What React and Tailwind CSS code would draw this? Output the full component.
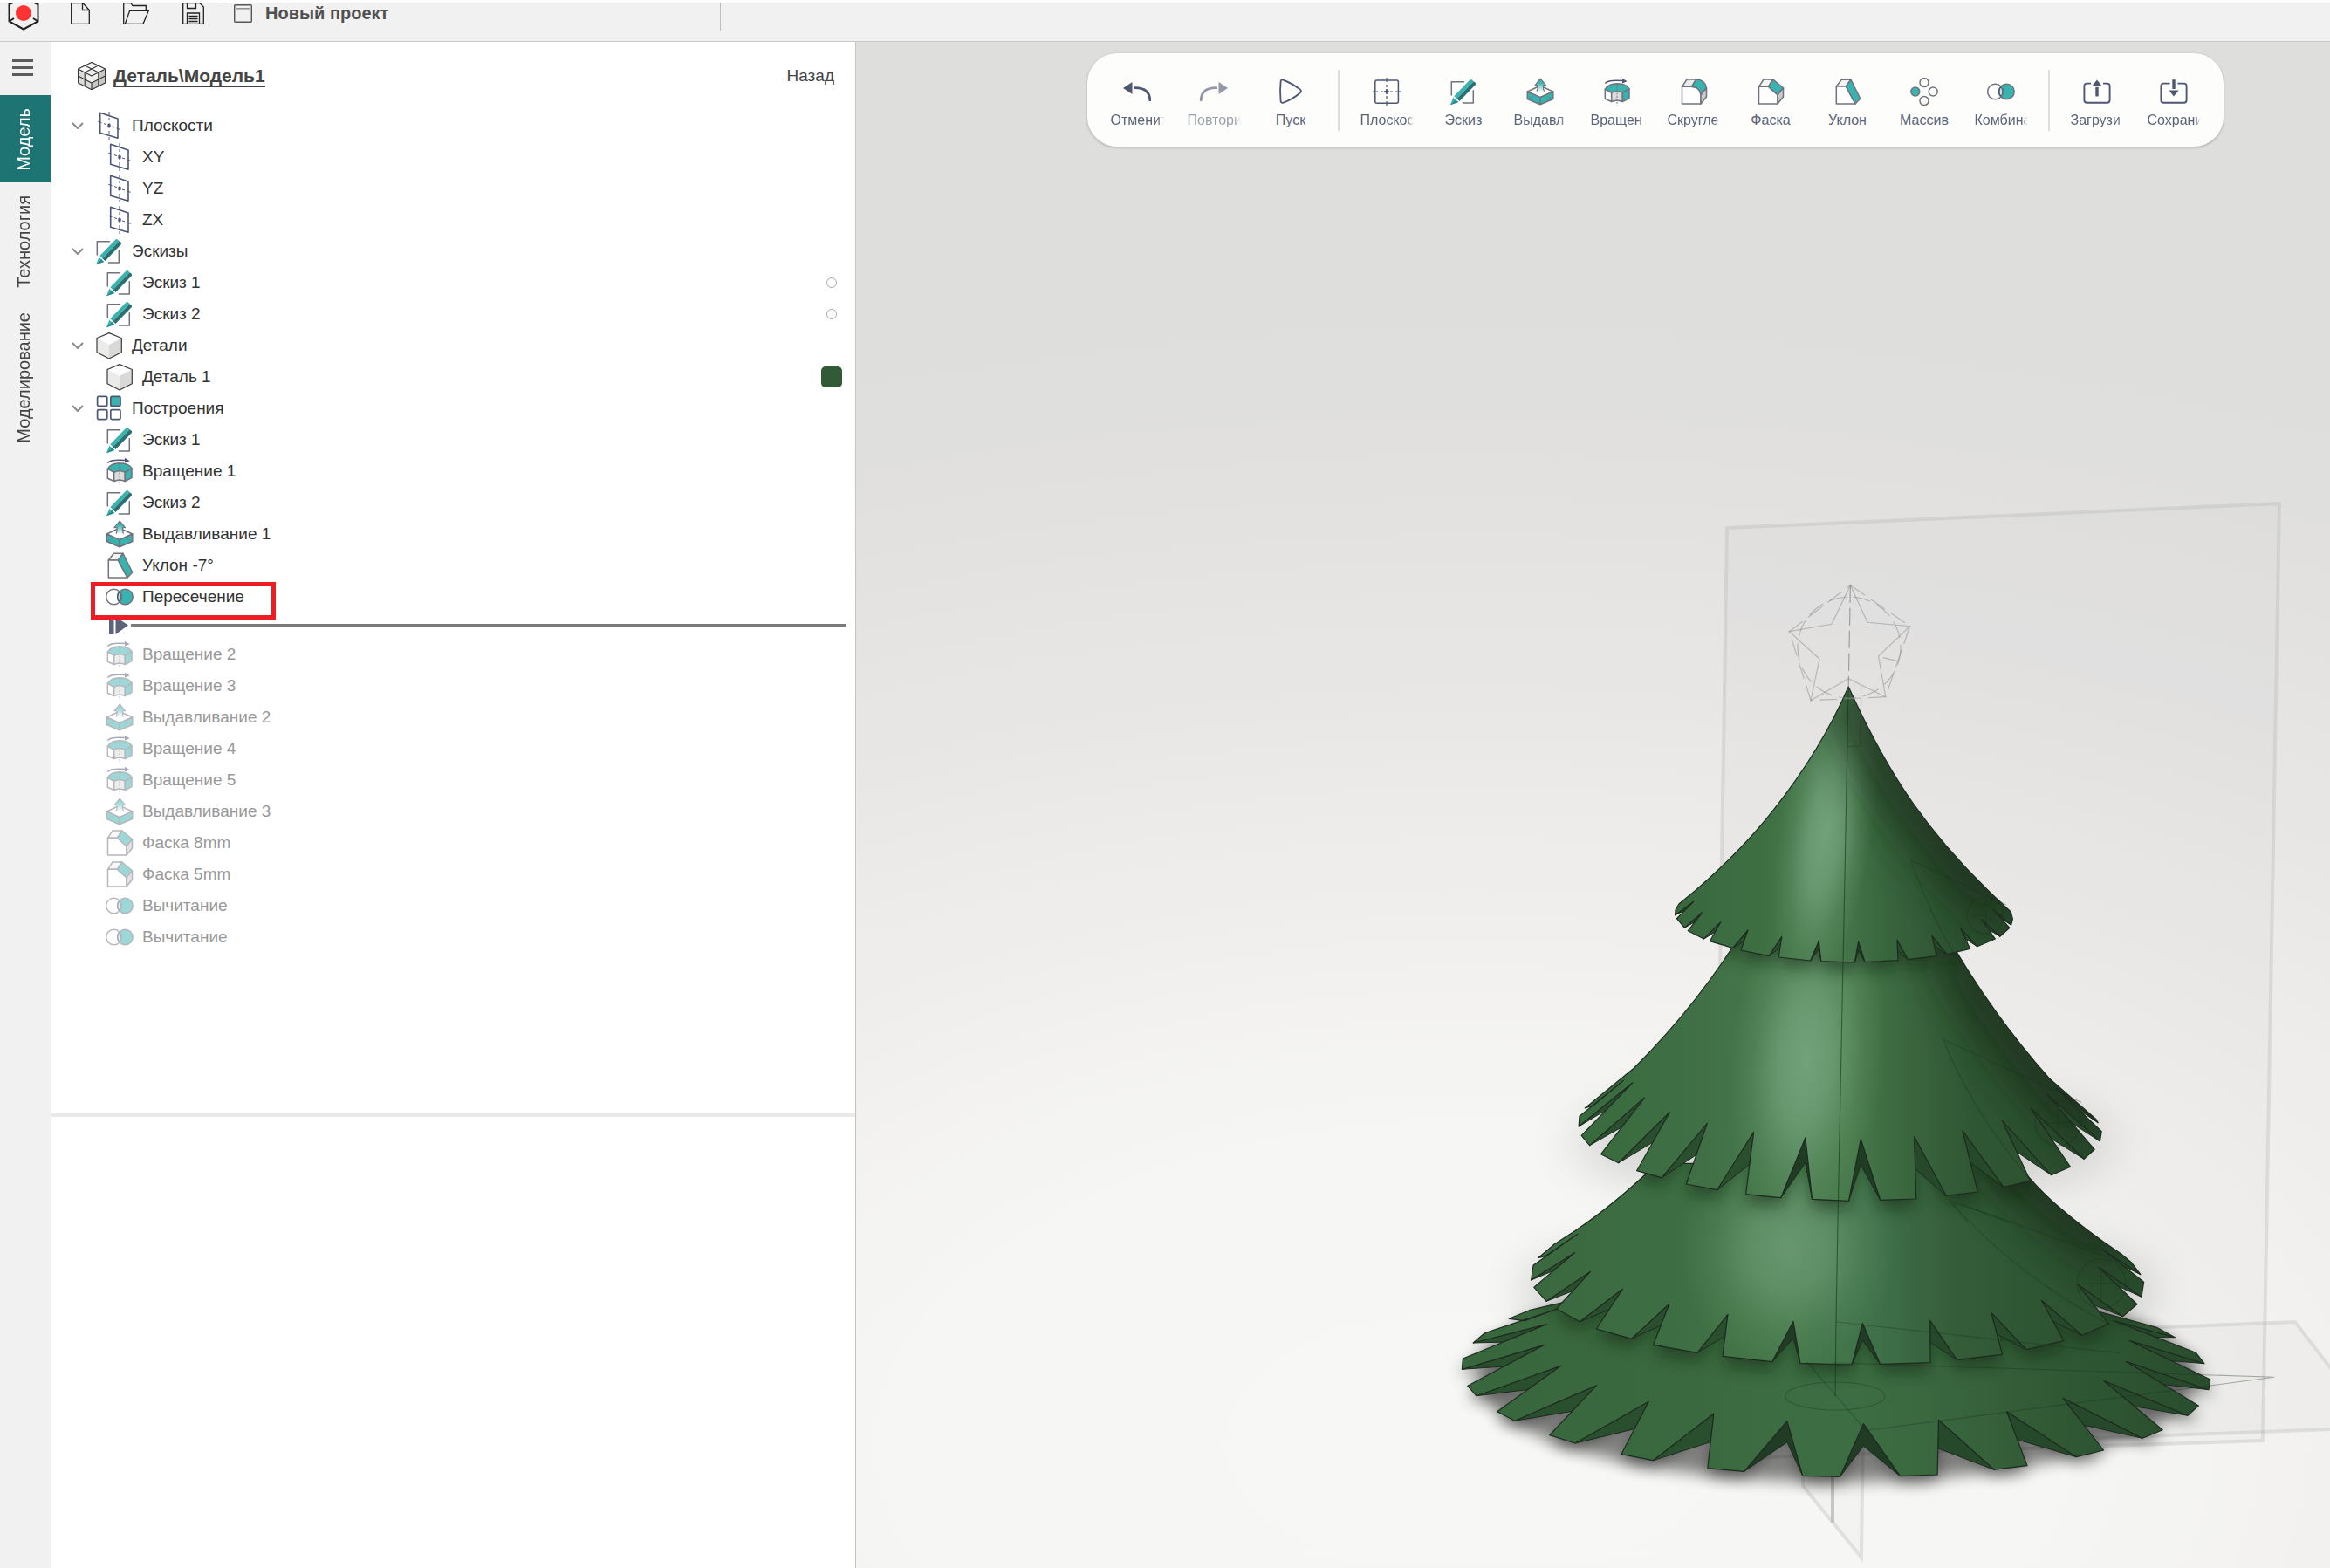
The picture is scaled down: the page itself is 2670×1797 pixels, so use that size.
import { useState } from 'react';

const TEAL = '#39b3b0';
const INK = '#4d5673';
const EDGE = '#70737d';

// -- icons, all on a 32 x 32 grid

const Icon = ({ children, className = 'h-8 w-8 shrink-0' }) => (
    <svg viewBox="0 0 32 32" className={className} fill="none" stroke={EDGE} strokeWidth="1.5" strokeLinejoin="round" aria-hidden="true">
        {children}
    </svg>
);

const SketchIcon = () => (
    <Icon>
        <path d="M2.3 20V4.7H16.5M15.3 29H27.3V14.7" strokeLinecap="round" />
        <path d="M5.3 21.3L23.4 2.6Q24.6 1.6 26 2.6L27.6 4.2L8.4 24.2Z" fill={TEAL} stroke="none" />
        <path d="M8.4 24.2L27.6 4.2L29.6 5.8Q30.6 7 29.6 8.2L11.5 27Z" fill="#2c6f70" stroke="none" />
        <path d="M4.4 22.4Q5.6 24.6 7.6 25Q8.4 27.6 10.4 28L1 31.2Z" fill={TEAL} stroke="none" />
        <path d="M7.6 25Q8.4 27.6 10.4 28L1 31.2Z" fill="#2c8a8a" stroke="none" />
    </Icon>
);

const PlaneIcon = () => (
    <Icon>
        <g stroke={INK}>
            <rect x="2.8" y="3" width="26.6" height="26.3" rx="2" />
            <path d="M0 16H6M9 16H12M20 16H23M26 16H32M16 0V5M16 8V11M16 21V24M16 27V32" strokeWidth="1.2" />
            <path d="M16 13V19M13 16H19" strokeWidth="1.6" />
        </g>
        <circle cx="16" cy="16" r="1.8" fill={INK} stroke="none" />
    </Icon>
);

const PlaneSkewIcon = () => (
    <Icon>
        <path d="M5.7 1.3L26 8V30.3L5.7 24.3Z" stroke={INK} strokeWidth="1.6" />
        <path d="M3.3 11.3L7.5 12.7M10 13.6L13 14.6M19 17L22 18M24.5 19L28.7 20.3M16 0V4M16 7V10M16 22V26M16 29V32" stroke={INK} strokeWidth="1" />
        <ellipse cx="16" cy="16" rx="1.8" ry="2.8" fill={INK} stroke="none" />
    </Icon>
);

const RevolveIcon = () => (
    <Icon>
        <path d="M2.3 6.4Q6 2.2 23 3.6" stroke={INK} />
        <path d="M22 .8L27.6 4.2L22 6.6Z" fill={INK} stroke="none" />
        <path d="M2.3 13.3Q6 7 16 6.8Q27 7 30 12.8L22.3 17.3Q16 14.4 9.7 17.3Z" fill={TEAL} />
        <path d="M2.3 13.3L9.7 17.3V27.5L2.3 24.2Z" fill="#fff" />
        <path d="M9.7 17.3Q16 14.4 22.3 17.3V27.5Q16 25 9.7 27.5Z" fill="#dcdcdc" />
        <path d="M22.3 17.3L30 12.8V23.6L22.3 27.5Z" fill={TEAL} />
        <path d="M16 7V32" strokeWidth=".9" strokeDasharray="2 1.5" />
    </Icon>
);

const ExtrudeIcon = () => (
    <Icon>
        <defs>
            <linearGradient id="lift" x1="0" y1="0" x2="0" y2="1">
                <stop offset=".3" stopColor={TEAL} />
                <stop offset="1" stopColor="#fff" />
            </linearGradient>
        </defs>
        <path d="M1.3 16L15.9 9.300L30.8 16L15.9 22.6Z" fill="#fff" />
        <path d="M1.3 16L15.9 22.6V30.7L1.3 24.5ZM30.8 16L15.9 22.6V30.7L30.8 24.5Z" fill={TEAL} />
        <path d="M2 24L8 21.5M30 24L24 21.5" strokeWidth=".6" />
        <path d="M16.2 1.2L22.5 8.6H19.4Q19.2 13 21.4 16.4H11.2Q13.4 13 13.2 8.6H10Z" fill="url(#lift)" stroke="none" />
        <path d="M12 15.6Q13.4 13 13.2 8.6H10L16.2 1.2L22.5 8.6H19.4Q19.2 13 20.6 15.6" strokeWidth="1.2" />
    </Icon>
);

const DraftIcon = () => (
    <Icon>
        <path d="M3.3 10L9.3 2.3H20L14.3 10Z" fill="#f3f3f3" />
        <path d="M3.3 10H14.3L25 30H3.3Z" fill="#fff" />
        <path d="M14.3 10L20 2.3L30.7 24L25 30Z" fill={TEAL} />
    </Icon>
);

const ChamferIcon = () => (
    <Icon>
        <path d="M2.5 10.3L8 2H18.8L13.4 10.3Z" fill="#f3f3f3" />
        <path d="M2.5 10.3H13.4L24 19.7V30H2.5Z" fill="#fff" />
        <path d="M13.4 10.3L18.8 2L30.5 11.8L24 19.7Z" fill={TEAL} />
        <path d="M24 19.7L30.5 11.8V22L24 30Z" fill="#c9c9c9" />
    </Icon>
);

const FilletIcon = () => (
    <Icon>
        <path d="M2.5 10.3L8 2H18.8L13.4 10.3Z" fill="#ececec" />
        <path d="M2.5 10.3H13.4Q23 10.6 24 19.7V30H2.5Z" fill="#fff" />
        <path d="M13.4 10.3L18.8 2Q29.4 2.6 30.5 11.8L24 19.7Q23 10.6 13.4 10.3Z" fill={TEAL} />
        <path d="M24 19.7L30.5 11.8V22L24 30Z" fill="#c9c9c9" />
    </Icon>
);

const PatternIcon = () => (
    <Icon>
        <circle cx="16" cy="5.6" r="5" />
        <circle cx="5.8" cy="16" r="5" fill={TEAL} />
        <circle cx="26.2" cy="16" r="5" />
        <circle cx="16" cy="26.6" r="5" />
    </Icon>
);

const CombineIcon = () => (
    <Icon>
        <circle cx="22.4" cy="16" r="8.8" fill={TEAL} />
        <path d="M15.9 10.2A8.8 8.8 0 0 1 15.9 21.8A8.8 8.8 0 0 1 15.9 10.2Z" fill="#bfe3e2" stroke={INK} />
        <circle cx="9.5" cy="16" r="8.8" />
    </Icon>
);

const CubeIcon = () => (
    <Icon>
        <path d="M2 7.5L16 1.6L30.3 7.5L16 15Z" fill="#fcfcfc" stroke="none" />
        <path d="M2 7.5L16 15V31L2 23.8Z" fill="#ebebea" stroke="none" />
        <path d="M30.3 7.5L16 15V31L30.3 23.8Z" fill="#d9d9d8" stroke="none" />
        <path d="M16 1.6L30.3 7.5V23.8L16 31L2 23.8V7.5Z" stroke="#3c3c3c" strokeWidth="1.2" />
    </Icon>
);

const CubesIcon = () => (
    <Icon>
        <path d="M16 0L31.6 8L16 16L.4 8Z" fill="#f7f7f7" stroke="none" />
        <path d="M.4 8L16 16V32L.4 24Z" fill="#dcdbd8" stroke="none" />
        <path d="M31.6 8L16 16V32L31.6 24Z" fill="#c9c8c4" stroke="none" />
        <path d="M16 8L23.8 12V20L16 24L8.2 20V12Z" fill="#efefed" stroke="none" />
        <path d="M16 .4L31.6 8V24L16 31.7L.4 24V8ZM8.2 4L23.8 12M23.8 4L8.2 12M.4 8L8.2 12V28M31.6 8L23.8 12V28M.4 16L8.2 20L16 24L23.8 20L31.6 16M8.2 12L16 16L23.8 12M16 24V31.7" stroke="#333" strokeWidth="1.1" />
    </Icon>
);

const BlocksIcon = () => (
    <Icon>
        <g stroke={INK} strokeWidth="1.7">
            <rect x="2.6" y="2.4" width="11.2" height="11" rx="1.5" />
            <rect x="17.8" y="2.4" width="11.2" height="11" rx="1.5" fill={TEAL} />
            <rect x="2.6" y="17.6" width="11.2" height="11" rx="1.5" />
            <rect x="17.8" y="17.6" width="11.2" height="11" rx="1.5" />
        </g>
    </Icon>
);

const UndoIcon = () => (
    <Icon>
        <path d="M0 12L10.5 5V19Z" fill={INK} stroke="none" />
        <path d="M12 11.6Q30.4 10.6 31 27" stroke={INK} strokeWidth="2.8" />
    </Icon>
);

const RedoIcon = () => (
    <Icon>
        <path d="M32 12L21.5 5V19Z" fill={INK} stroke="none" />
        <path d="M20 11.6Q1.6 10.6 1 27" stroke={INK} strokeWidth="2.8" />
    </Icon>
);

const PlayIcon = () => (
    <Icon>
        <path d="M4.6 4.4Q5 1.6 7.6 2.6Q18 6.6 27 13.6Q28.8 15.4 27 17.2Q18 25 7.6 28.6Q5 29.4 4.6 26.8Q3.4 15 4.6 4.4Z" stroke={INK} strokeWidth="1.8" />
    </Icon>
);

const LoadIcon = () => (
    <Icon>
        <path d="M9 6.6H4.4Q1.4 6.6 1.4 9.6V25.8Q1.4 28.8 4.4 28.8H27.6Q30.6 28.8 30.6 25.8V9.6Q30.6 6.6 27.6 6.6H23" stroke={INK} strokeWidth="1.9" />
        <path d="M16 2.4L21.6 9.4H10.4Z" fill={INK} stroke="none" />
        <path d="M16 10.8V21.4" stroke={INK} strokeWidth="3.4" />
    </Icon>
);

const SaveIcon = () => (
    <Icon>
        <path d="M11.5 6.6H4.4Q1.4 6.6 1.4 9.6V25.8Q1.4 28.8 4.4 28.8H27.6Q30.6 28.8 30.6 25.8V9.6Q30.6 6.6 27.6 6.6H20.5" stroke={INK} strokeWidth="1.9" />
        <path d="M16 21.4L21.6 14.4H10.4Z" fill={INK} stroke="none" />
        <path d="M16 2.2V13" stroke={INK} strokeWidth="3.4" />
    </Icon>
);

// -- data

// "short" is what fits under an icon, it fades out at its end
const TOOLS = [
    [
        { label: 'Отменить', short: 'Отменит', icon: UndoIcon },
        { label: 'Повторить', short: 'Повтори', icon: RedoIcon, disabled: true },
        { label: 'Пуск', icon: PlayIcon },
    ],
    [
        { label: 'Плоскость', short: 'Плоскос', icon: PlaneIcon },
        { label: 'Эскиз', icon: SketchIcon },
        { label: 'Выдавливание', short: 'Выдавл', icon: ExtrudeIcon },
        { label: 'Вращение', short: 'Вращен', icon: RevolveIcon },
        { label: 'Скругление', short: 'Скругле', icon: FilletIcon },
        { label: 'Фаска', icon: ChamferIcon },
        { label: 'Уклон', icon: DraftIcon },
        { label: 'Массив', icon: PatternIcon },
        { label: 'Комбинация', short: 'Комбина', icon: CombineIcon },
    ],
    [
        { label: 'Загрузить', short: 'Загрузи', icon: LoadIcon },
        { label: 'Сохранить', short: 'Сохрани', icon: SaveIcon },
    ],
];

const GROUPS = [
    {
        label: 'Плоскости', icon: PlaneSkewIcon, items: [
            { label: 'XY', icon: PlaneSkewIcon },
            { label: 'YZ', icon: PlaneSkewIcon },
            { label: 'ZX', icon: PlaneSkewIcon },
        ],
    },
    {
        label: 'Эскизы', icon: SketchIcon, items: [
            { label: 'Эскиз 1', icon: SketchIcon, mark: 'circle' },
            { label: 'Эскиз 2', icon: SketchIcon, mark: 'circle' },
        ],
    },
    {
        label: 'Детали', icon: CubeIcon, items: [
            { label: 'Деталь 1', icon: CubeIcon, mark: 'color' },
        ],
    },
    {
        label: 'Построения', icon: BlocksIcon, items: [
            { label: 'Эскиз 1', icon: SketchIcon },
            { label: 'Вращение 1', icon: RevolveIcon },
            { label: 'Эскиз 2', icon: SketchIcon },
            { label: 'Выдавливание 1', icon: ExtrudeIcon },
            { label: 'Уклон -7°', icon: DraftIcon },
            { label: 'Пересечение', icon: CombineIcon, framed: true },
            { rollback: true },
            { label: 'Вращение 2', icon: RevolveIcon, off: true },
            { label: 'Вращение 3', icon: RevolveIcon, off: true },
            { label: 'Выдавливание 2', icon: ExtrudeIcon, off: true },
            { label: 'Вращение 4', icon: RevolveIcon, off: true },
            { label: 'Вращение 5', icon: RevolveIcon, off: true },
            { label: 'Выдавливание 3', icon: ExtrudeIcon, off: true },
            { label: 'Фаска 8mm', icon: ChamferIcon, off: true },
            { label: 'Фаска 5mm', icon: ChamferIcon, off: true },
            { label: 'Вычитание', icon: CombineIcon, off: true },
            { label: 'Вычитание', icon: CombineIcon, off: true },
        ],
    },
];

// -- the fir tree model

//
// map an absolute path from local units to scene units
//
const place = (ox, oy, sx, sy) => (d) =>
    d.replace(/(-?[\d.]+)[ ,](-?[\d.]+)/g, (_, x, y) => `${(ox + x / sx).toFixed(1)} ${(oy + y / sy).toFixed(1)}`);

const onTop = place(1840, 640, 2.8, 3);
const onMiddle = place(1760, 1060, 2.24, 3);
const onLeft = place(1640, 1380, 2.8, 3);
const onRight = place(2100, 1380, 2.74, 3);

// every tooth: "left corner, right corner, notch after it"
const teeth = (map, rows) => rows.map((row) => map(row).split(',').map((p) => p.trim().split(' ').map(Number)));

const TIERS = [
    {
        id: 'tier4',
        start: onLeft('M1000 200L560 300L415 340L315 365'),
        end: onRight('L905 390L600 300L0 200'),
        teeth: [
            ...teeth(onLeft, [
                '250 394,300 401,405 360', '172 443,135 477,371 413', '102 531,99 568,361 485', '117 625,145 659,416 556',
                '212 713,268 745,531 623', '380 794,462 822,698 679', '610 860,712 881,907 720', '887 908,1004 919,1142 746',
                '1192 934,1312 937,1387 755',
            ]),
            ...teeth(onRight, [
                '212 935,329 930,333 742', '507 913,611 899,547 713', '765 869,851 846,723 667', '973 805,1036 776,851 607',
                '1115 727,1149 693,921 541', '1181 638,1186 603,931 469', '1167 548,1141 511,880 400', '1075 458,1020 425,905 390',
            ]),
        ],
        middle: [7, 8],
        span: [1675, 2533],
        stops: [[0, '#39673d'], [0.3, '#3b693f'], [0.5, '#3d6e43'], [0.62, '#3a683f'], [0.8, '#305833'], [1, '#294d2d']],
    },
    {
        id: 'tier3',
        start: onLeft('M1300 -140L725 -140Q590 0 460 93L395 138'),
        end: onRight('L905 170Q800 95 700 0Q640 -58 580 -140L0 -140'),
        teeth: [
            ...teeth(onLeft, [
                '343 185,368 178,470 103', '328 210,321 261,461 167', '330 286,370 334,511 232', '402 360,477 404,614 292',
                '530 429,643 463,764 343', '713 484,854 511,952 379', '935 523,1094 542,1162 403', '1184 547,1350 552,1384 409',
            ]),
            ...teeth(onRight, [
                '149 550,307 545,306 400', '390 535,533 517,498 373', '608 500,726 470,656 331', '783 451,867 412,771 277',
                '911 386,956 344,835 217', '970 319,977 268,844 153', '967 242,938 200,905 170',
            ]),
        ],
        middle: [6, 7],
        span: [1755, 2457],
        stops: [[0, '#3a683f'], [0.25, '#3e6f44'], [0.42, '#457849'], [0.55, '#40724a'], [0.7, '#335c37'], [1, '#294c2d']],
        glow: { cx: 2050, cy: 1430, rx: 125, ry: 140, color: '#6b9a72', tilt: 8 },
        shade: 'M2270 1300Q2340 1380 2430 1436',
    },
    {
        id: 'tier2',
        start: onMiddle('M800 0L540 0Q425 260 252 492'),
        end: onMiddle('L1318 528Q1160 290 1040 0'),
        teeth: teeth(onMiddle, [
            '126 630,148 620,225 535', '112 658,110 693,248 543', '117 724,138 758,279 594', '167 788,212 818,344 643',
            '259 845,323 869,440 682', '386 891,465 911,559 712', '539 926,629 938,692 731', '709 943,803 949,834 736',
            '884 946,976 942,971 727', '1053 931,1134 918,1095 707', '1201 902,1269 880,1197 673', '1323 860,1372 832,1271 631',
            '1407 805,1434 772,1314 585', '1448 744,1452 710,1335 560', '1443 680,1438 668,1318 528',
        ]),
        middle: [6, 7],
        span: [1808, 2409],
        stops: [[0, '#386a3d'], [0.25, '#417046'], [0.42, '#487b4d'], [0.52, '#467849'], [0.62, '#3b683f'], [0.75, '#305733'], [1, '#2a4d2e']],
        glow: { cx: 2070, cy: 1215, rx: 88, ry: 210, color: '#76a67e', tilt: 5 },
        shade: 'M2235 1080Q2290 1190 2400 1300',
    },
    {
        id: 'tier1',
        start: onTop('M779 441Q690 660 540 862Q440 1000 287 1142L235 1188'),
        end: onTop('L1300 1215Q1110 1030 985 840Q880 680 779 441'),
        teeth: teeth(onTop, [
            '224 1208,223 1226,282 1180', '228 1238,253 1270,311 1216', '264 1280,315 1308,369 1250', '334 1316,408 1339,456 1278',
            '434 1347,524 1367,565 1300', '555 1371,657 1383,684 1315', '691 1385,799 1389,811 1318', '832 1388,938 1382,935 1312',
            '970 1379,1062 1367,1047 1297', '1095 1361,1169 1342,1139 1272', '1192 1334,1250 1308,1206 1241', '1265 1300,1296 1270,1243 1207',
            '1301 1260,1306 1240,1300 1215',
        ]),
        middle: [5, 6],
        span: [1919, 2307],
        stops: [[0, '#38673d'], [0.25, '#3e6f43'], [0.42, '#487a4d'], [0.5, '#457549'], [0.62, '#38663d'], [0.8, '#2e5532'], [1, '#294c2d']],
        glow: { cx: 2092, cy: 955, rx: 54, ry: 190, color: '#76a67e', tilt: 9 },
        shade: 'M2118 790Q2170 930 2300 1048',
    },
];

const outline = ({ start, end, teeth: rows }) =>
    start + rows.map(([a, b, n], i) => `L${a.join(' ')}L${b.join(' ')}${i < rows.length - 1 ? `L${n.join(' ')}` : ''}`).join('') + end + 'Z';

// inner walls of the notches, seen from the side that faces the viewer
const walls = ({ teeth: rows, middle }) =>
    rows.slice(0, -1).map(([, corner, notch], i) => {
        const next = rows[i + 1][0];
        const mix = (p) => [notch[0] + (p[0] - notch[0]) * 0.52, notch[1] + (p[1] - notch[1]) * 0.52];
        if (middle.includes(i)) {
            const deep = [notch[0], (notch[1] * 0.58 + corner[1] * 0.42)];
            return `M${notch.join(' ')}L${corner.join(' ')}L${deep.join(' ')}L${next.join(' ')}Z`;
        }
        return i < middle[0]
            ? `M${notch.join(' ')}L${corner.join(' ')}L${mix(next).join(' ')}Z`
            : `M${notch.join(' ')}L${next.join(' ')}L${mix(corner).join(' ')}Z`;
    });

const Tier = ({ tier, above }) => {
    const body = outline(tier);
    const faces = walls(tier);
    const { id, span, stops, glow, shade, middle } = tier;

    return (
        <g strokeLinejoin="round">
            <defs>
                <linearGradient id={`${id}-fill`} gradientUnits="userSpaceOnUse" x1={span[0]} y1="0" x2={span[1]} y2="0">
                    {stops.map(([offset, color]) => <stop key={offset} offset={offset} stopColor={color} />)}
                </linearGradient>
                {glow && (
                    <radialGradient id={`${id}-glow`}>
                        <stop offset="0" stopColor={glow.color} stopOpacity=".9" />
                        <stop offset=".35" stopColor={glow.color} stopOpacity=".68" />
                        <stop offset=".7" stopColor={glow.color} stopOpacity=".22" />
                        <stop offset="1" stopColor={glow.color} stopOpacity="0" />
                    </radialGradient>
                )}
                <clipPath id={`${id}-clip`}><path d={body} /></clipPath>
            </defs>
            {faces.map((d, i) => (
                <path key={d} d={d} fill={middle.includes(i) ? '#203c24' : i < middle[0] ? '#294f2e' : '#27492b'} stroke="#1d2b1f" strokeWidth="1" />
            ))}
            <path d={body} fill={`url(#${id}-fill)`} />
            <g clipPath={`url(#${id}-clip)`}>
                {glow && <ellipse cx={glow.cx} cy={glow.cy} rx={glow.rx} ry={glow.ry} fill={`url(#${id}-glow)`} transform={`rotate(${glow.tilt} ${glow.cx} ${glow.cy})`} />}
                {shade && <path d={shade} fill="none" stroke="#142616" strokeWidth="60" opacity=".65" filter="url(#dusk)" />}
                {above && <path d={outline(above)} transform="translate(0 10)" fill="#10240f" opacity=".5" filter="url(#cast)" />}
            </g>
            <path d={body} fill="none" stroke="#1d2b1f" strokeWidth="1.2" />
        </g>
    );
};

const Scene = () => (
    <svg className="absolute inset-0 h-full w-full" viewBox="981 48 1689 1749" preserveAspectRatio="xMidYMid slice" role="img" aria-label="Модель ёлки">
        <defs>
            <filter id="dusk" x="-100%" y="-60%" width="300%" height="220%"><feGaussianBlur stdDeviation="24" /></filter>
            <filter id="cast" x="-20%" y="-20%" width="140%" height="140%"><feGaussianBlur stdDeviation="9" /></filter>
            <filter id="haze" x="-50%" y="-50%" width="200%" height="200%"><feGaussianBlur stdDeviation="28" /></filter>
        </defs>

        {/* construction planes */}
        <g fill="#8a8a90" fillOpacity=".035" stroke="#b4b4b4" strokeOpacity=".32" strokeWidth="4">
            <path d="M1979 605L2612 577L2593 1651L1962 1672Z" />
            <path d="M2380 1525L2630 1515L2720 1632V1636L2380 1649Z" />
            <path d="M2066 1640V1703L2133 1785L2135 1640Z" />
            <path d="M2100 1680V1745" strokeOpacity=".7" />
        </g>

        {/* shadows on the ground */}
        <g fill="#000">
            <ellipse cx="2110" cy="1310" rx="310" ry="60" opacity=".14" filter="url(#haze)" />
            <ellipse cx="2106" cy="1480" rx="360" ry="60" opacity=".22" filter="url(#haze)" />
            <path d={outline(TIERS[0])} transform="translate(0 8)" opacity=".4" filter="url(#cast)" />
            <ellipse cx="2104" cy="1580" rx="410" ry="118" opacity=".48" filter="url(#cast)" />
        </g>

        {TIERS.map((tier, i) => <Tier key={tier.id} tier={tier} above={TIERS[i + 1]} />)}

        {/* sketch lines over the body */}
        <g fill="none" stroke="#16301a" strokeOpacity=".35" strokeWidth="1.1">
            <path d={onTop('M779 441L762 1388')} strokeOpacity=".6" />
            <path d="M2112 1103L2106 1400L2104 1515L2103 1600" strokeOpacity=".6" />
            <path d={onTop('M819 520L816 644L776 647M979 1037L1285 1190M979 1037Q1040 1220 1115 1355')} />
            <path d={onTop('M1176 1228L1226 1228M1242 1225L1280 1225M1219 1165L1219 1200M1219 1216L1219 1250')} />
            <ellipse cx="2275" cy="1049" rx="21" ry="21" />
            <path d={onMiddle('M1045 394L1400 610M1045 394Q1120 640 1265 870M1060 948L1210 1020M1060 948L1108 1020')} />
            <path d={onMiddle('M1297 682L1375 679M1340 610L1338 750')} />
            <ellipse cx="2358" cy="1287" rx="26" ry="26" />
            <path d={onRight('M380 0Q560 230 870 415M405 0L880 190M12 405L905 512')} />
            <path d={onRight('M783 274L915 271M843 220L843 340')} />
            <ellipse cx="2408" cy="1471" rx="28" ry="28" />
            <ellipse cx="2103" cy="1600" rx="57" ry="16" />
            <path d={onLeft('M1205 542L1395 778')} />
            <path d={onRight('M0 545L1387 595L108 778')} />
        </g>

        {/* star outline above the top */}
        <g fill="none" stroke="#8c8c8c" strokeOpacity=".5" strokeWidth="1.2">
            <path d={onTop('M785 92L840 220L976 233L875 336L898 476L779 413L658 488L686 346L589 251L725 226Z')} />
            <path d={onTop('M785 92L976 233L898 476L658 488L589 251Z')} strokeDasharray="20 8" />
            <path d={onTop('M785 92L779 441')} strokeDasharray="20 6" strokeOpacity=".8" />
            <path d={onTop('M819 433L819 520M890 341L937 353')} />
            <ellipse cx="2119" cy="742" rx="59" ry="58" strokeDasharray="20 8" />
        </g>
    </svg>
);

// -- page parts

const Divider = () => <span className="h-8 w-px bg-[#bdbdbd]" />;

const TitleBar = () => (
    <header className="flex h-12 items-start border-t-[3px] border-b border-t-white border-b-[#c9c9c9] bg-[#f1f1f1]">
        <svg viewBox="0 3 58 33" className="h-[33px] w-[58px] shrink-0" fill="none" stroke="#222" strokeWidth="2" aria-hidden="true">
            <path d="M15 3L10.500 5V24.500L27 33.500L43.500 24.500V5L39 3M10.500 24.500L16 21M43.500 24.500L38 21" />
            <circle cx="27" cy="15" r="9" fill="#ff3333" stroke="none" />
        </svg>
        <div className="flex grow gap-[38px] pl-[23px]">
            <button type="button" aria-label="Создать">
                <svg viewBox="0 0 22 26" className="h-[26px] w-[22px]" fill="none" stroke="#222" strokeWidth="1.3">
                    <path d="M.7 0V24.300H21.300V8.500L13.500 0M13.500 0V8.500H21.300M0 .5H14" />
                </svg>
            </button>
            <button type="button" aria-label="Открыть">
                <svg viewBox="0 0 30 26" className="h-[26px] w-[30px]" fill="none" stroke="#222" strokeWidth="1.3">
                    <path d="M.7 24.300V.6H9L11 3.500H26.300V9M.7 24.300H23L29.300 9.300H7.600L2.500 24" />
                </svg>
            </button>
            <button type="button" aria-label="Сохранить проект">
                <svg viewBox="0 0 25 26" className="h-[26px] w-[25px]" fill="none" stroke="#222" strokeWidth="1.3">
                    <path d="M.7 0V24.300H24.300V5L19.500 0M5.500 0V6.500H15.500V0M5.500 24V12H19.500V24M7.500 15.500H17.500M7.500 18.500H17.500M7.500 21.500H17.500M0 .5H20" />
                </svg>
            </button>
        </div>
        <div className="flex w-[calc(100%-255px)] shrink-0">
            <Divider />
            <div className="flex h-6 w-[569px] items-center gap-[15px] pl-3">
                <svg viewBox="0 0 21 21" className="h-[21px] w-[21px]" fill="none" stroke="#555" strokeWidth="1.4" aria-hidden="true">
                    <rect x=".7" y=".7" width="19.600" height="19.600" rx="1" />
                    <path d="M3 4.800H18" stroke="#888" />
                </svg>
                <h1 className="text-[20px] font-bold text-[#505050]">Новый проект</h1>
            </div>
            <Divider />
        </div>
    </header>
);

const TABS = ['Модель', 'Технология', 'Моделирование'];

const SideTabs = ({ active, onSelect }) => (
    <nav className="flex w-[59px] shrink-0 flex-col border-r border-[#c4c4c4] bg-[#f1f1f1]">
        <button type="button" aria-label="Меню" className="flex h-[61px] flex-col items-start justify-center gap-[5px] pb-[2px] pl-[14px]">
            <span className="h-[3px] w-6 bg-[#5c5c5c]" />
            <span className="h-[3px] w-6 bg-[#5c5c5c]" />
            <span className="h-[3px] w-6 bg-[#5c5c5c]" />
        </button>
        {TABS.map((tab) => (
            <button
                key={tab}
                type="button"
                onClick={() => onSelect(tab)}
                className={`flex items-center justify-center pt-[15px] pr-[5px] pb-[13px] text-[20px] ${tab === active ? 'bg-[#1e7373] text-white' : 'text-[#444]'}`}
            >
                <span className="rotate-180 [writing-mode:vertical-rl]">{tab}</span>
            </button>
        ))}
    </nav>
);

const Mark = ({ kind }) => (
    <span className="ml-auto flex w-6 justify-center">
        {kind === 'circle' && <button type="button" aria-label="Показать" className="h-3 w-3 rounded-full border border-[#aaa]" />}
        {kind === 'color' && <button type="button" aria-label="Цвет детали" className="h-6 w-6 rounded-[5px] bg-[#335a36]" />}
    </span>
);

const TreeItem = ({ item }) => {
    if (item.rollback) {
        return (
            <li className="flex h-[30px] items-center gap-[3px] pr-[11px] pl-[66px]">
                <svg viewBox="0 0 22 20" className="h-5 w-[22px]" fill="#5d6379" aria-hidden="true">
                    <path d="M0 0H5.500V20H0ZM7.500 0L22 9.500L7.500 20Z" />
                </svg>
                <span className="h-1 grow bg-[#7b7b7b]" />
            </li>
        );
    }
    return (
        <li className="relative flex h-9 items-center pr-[15px] pl-[62px]">
            <button type="button" className={`flex items-center gap-[10px] ${item.off ? 'text-[#999]' : 'text-[#333]'}`}>
                <span className={item.off ? 'opacity-50' : ''}><item.icon /></span>
                {item.label}
            </button>
            {item.mark && <Mark kind={item.mark} />}
            {item.framed && <span className="pointer-events-none absolute top-px left-[45px] z-10 h-[43px] w-[212px] border-[5px] border-[#ee1c25]" />}
        </li>
    );
};

const TreeGroup = ({ group }) => {
    const [open, setOpen] = useState(true);

    return (
        <li>
            <button type="button" aria-expanded={open} onClick={() => setOpen(!open)} className="flex h-9 items-center pl-[23px] text-[#333]">
                <svg viewBox="0 0 14 8" className={`mr-[13px] h-2 w-[14px] ${open ? '' : '-rotate-90'}`} fill="none" stroke="#8a8a8a" strokeWidth="2" aria-hidden="true">
                    <path d="M1 1L7 7L13 1" />
                </svg>
                <group.icon />
                <span className="ml-[10px]">{group.label}</span>
            </button>
            {open && (
                <ul>
                    {group.items.map((item, i) => <TreeItem key={i} item={item} />)}
                </ul>
            )}
        </li>
    );
};

const ModelPanel = () => (
    <section className="grid grid-rows-[1232fr_517fr] border-r border-[#c4c4c4] bg-white text-[19px]">
        <div className="border-b-4 border-[#e9e9e9]">
            <div className="flex h-[78px] items-center pr-6 pl-[30px]">
                <CubesIcon />
                <a href="#model" className="ml-[9px] border-b border-[#444] text-[21px] leading-6 font-bold text-[#444]">Деталь\Модель1</a>
                <button type="button" className="ml-auto text-[#444]">Назад</button>
            </div>
            <ul>
                {GROUPS.map((group) => <TreeGroup key={group.label} group={group} />)}
            </ul>
        </div>
        <div />
    </section>
);

const ToolButton = ({ tool }) => (
    <button
        type="button"
        title={tool.label}
        disabled={tool.disabled}
        className={`flex h-[107px] w-[88px] flex-col items-center gap-[7px] pt-7 ${tool.disabled ? 'opacity-60' : ''}`}
    >
        <tool.icon />
        <span className={`w-[61px] overflow-hidden text-[16px] leading-5 whitespace-nowrap text-[#5b6478] ${tool.short ? 'text-left [mask-image:linear-gradient(to_right,black_88%,transparent)]' : ''}`}>
            {tool.short ?? tool.label}
        </span>
    </button>
);

const Toolbar = () => (
    <div role="toolbar" className="relative mt-[13px] mr-[122px] ml-auto flex w-max items-center rounded-[34px] bg-[#fdfdfc] px-[13px] shadow-[0_1px_3px_rgba(0,0,0,0.25)]">
        {TOOLS.map((tools, i) => (
            <div key={i} className="flex items-center">
                {i > 0 && <span className="mx-[10px] h-[70px] w-[2px] bg-[#dedede]" />}
                {tools.map((tool) => <ToolButton key={tool.label} tool={tool} />)}
            </div>
        ))}
    </div>
);

export default function App() {

    const [tab, setTab] = useState('Модель');

    return (
        <div className="flex min-h-screen flex-col font-['Liberation_Sans',Arial,sans-serif]">
            <TitleBar />
            <div className="flex grow">
                <SideTabs active={tab} onSelect={setTab} />
                <main className="grid grow grid-cols-[922fr_1689fr]">
                    <ModelPanel />
                    <section className="relative overflow-hidden bg-[radial-gradient(ellipse_180%_95%_at_42%_92%,#f7f7f6_0%,#f6f6f5_22%,#f0efee_36%,#e8e7e6_52%,#e3e2e1_64%,#dededd_77%)]">
                        <Scene />
                        <Toolbar />
                    </section>
                </main>
            </div>
        </div>
    );
}
